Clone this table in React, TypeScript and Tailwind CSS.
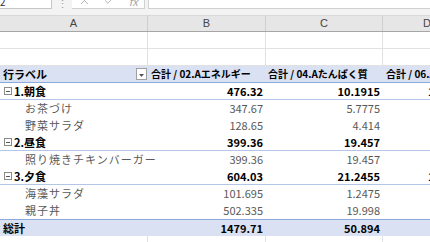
import React from "react";
import { X, Check } from "lucide-react";

type Row = {
  label: string;
  kind: "cat" | "item";
  b: string;
  c: string;
  d: string;
};

const rows: Row[] = [
  { label: "1.朝食", kind: "cat", b: "476.32", c: "10.1915", d: "15.84" },
  { label: "お茶づけ", kind: "item", b: "347.67", c: "5.7775", d: "8.3" },
  { label: "野菜サラダ", kind: "item", b: "128.65", c: "4.414", d: "7.5" },
  { label: "2.昼食", kind: "cat", b: "399.36", c: "19.457", d: "" },
  { label: "照り焼きチキンバーガー", kind: "item", b: "399.36", c: "19.457", d: "" },
  { label: "3.夕食", kind: "cat", b: "604.03", c: "21.2455", d: "16.02" },
  { label: "海藻サラダ", kind: "item", b: "101.695", c: "1.2475", d: "4.1" },
  { label: "親子丼", kind: "item", b: "502.335", c: "19.998", d: "9.6" },
];

const cols = "grid grid-cols-[148px_118px_117px_88px]";

function EmptyRow() {
  return (
    <div className={`${cols} h-[17px]`}>
      <div className="border-r border-b border-[#e1e1e1]" />
      <div className="border-r border-b border-[#e1e1e1]" />
      <div className="border-r border-b border-[#e1e1e1]" />
      <div className="border-b border-[#e1e1e1]" />
    </div>
  );
}

function Collapse() {
  return (
    <span className="mr-[2px] flex h-[8px] w-[8px] items-center justify-center border border-[#8a8a8a] bg-white">
      <span className="h-px w-[4px] bg-[#555]" />
    </span>
  );
}

export default function App() {
  return (
    <div className="h-[242px] w-[430px] overflow-hidden bg-white font-['Noto_Sans_CJK_JP',sans-serif] text-[11px] text-black">
      {/* formula bar, top cut off */}
      <div className="flex h-[9px] items-end overflow-hidden bg-[#f3f3f3]">
        <div className="flex h-[20px] w-[52px] shrink-0 items-end border-r border-b border-[#c6c6c6] bg-white pb-[1px] text-[10px] leading-[10px] text-[#333]">
          2
        </div>
        <div className="flex h-[9px] w-[20px] shrink-0 items-start justify-center text-[#9a9a9a] leading-[6px]">
          ⋮
        </div>
        <div className="flex h-[20px] w-[73px] shrink-0 items-end justify-around border-r border-b border-[#d0d0d0] bg-white pb-[1px] text-[#a6a6a6]">
          <X size={13} strokeWidth={1.5} />
          <Check size={13} strokeWidth={1.5} />
          <span className="text-[11px] italic leading-[11px]">fx</span>
        </div>
        <div className="ml-[3px] h-[20px] flex-1 border-b border-l border-[#d0d0d0] bg-white" />
      </div>
      <div className="h-[6px] bg-[#f3f3f3]" />

      {/* column headers */}
      <div className={`${cols} h-[17px] border-b border-[#a6a6a6] border-t border-t-[#d8d8d8] bg-[#e6e6e6] text-[11px] leading-[15px] text-[#444] font-['Liberation_Sans',sans-serif]`}>
        <div className="border-r border-[#cfcfcf] text-center">A</div>
        <div className="border-r border-[#cfcfcf] text-center">B</div>
        <div className="border-r border-[#cfcfcf] text-center">C</div>
        <div className="text-center">D</div>
      </div>

      <EmptyRow />
      <EmptyRow />

      {/* pivot header */}
      <div className={`${cols} h-[17px] border-b border-[#8ea9db] bg-[#d9e1f2] font-bold leading-[16px]`}>
        <div className="flex items-center justify-between pl-[3px] pr-[1px]">
          <span>行ラベル</span>
          <span className="flex h-[12px] w-[11px] items-end justify-center border border-[#a0a0a0] bg-white pb-[2px]">
            <svg width="5" height="3" viewBox="0 0 5 3">
              <path d="M0 0h5L2.5 3z" fill="#555" />
            </svg>
          </span>
        </div>
        <div className="whitespace-nowrap pl-[3px] text-[10px]">合計 / 02.Aエネルギー</div>
        <div className="whitespace-nowrap pl-[2px] text-[10px]">合計 / 04.Aたんぱく質</div>
        <div className="whitespace-nowrap pl-[3px] text-[10px]">合計 / 06.Aカリウム</div>
      </div>

      {rows.map((r) =>
        r.kind === "cat" ? (
          <div key={r.label} className={`${cols} h-[17px] border-b border-[#b4c6e7] font-bold leading-[16px]`}>
            <div className="flex items-center pl-[4px]">
              <Collapse />
              <span>{r.label}</span>
            </div>
            <div className="pr-[3px] text-right">{r.b}</div>
            <div className="pr-[3px] text-right">{r.c}</div>
            <div className="whitespace-nowrap pl-[45px]">{r.d}</div>
          </div>
        ) : (
          <div key={r.label} className={`${cols} h-[17px] leading-[17px] text-[#595959]`}>
            <div className="whitespace-nowrap pl-[25px] tracking-[1px]">{r.label}</div>
            <div className="pr-[3px] text-right">{r.b}</div>
            <div className="pr-[3px] text-right">{r.c}</div>
            <div />
          </div>
        )
      )}

      {/* grand total */}
      <div className={`${cols} h-[17px] border-t border-[#8ea9db] bg-[#d9e1f2] font-bold leading-[16px]`}>
        <div className="pl-[3px]">総計</div>
        <div className="pr-[3px] text-right">1479.71</div>
        <div className="pr-[3px] text-right">50.894</div>
        <div />
      </div>

      <EmptyRow />
    </div>
  );
}
